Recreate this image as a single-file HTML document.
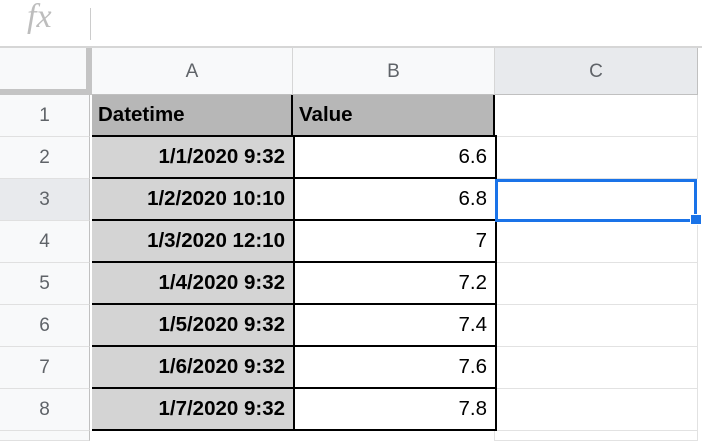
<!DOCTYPE html>
<html><head><style>
body{margin:0;width:702px;height:435px;overflow:hidden;background:#fff;font-family:"Liberation Sans",Arial,sans-serif;position:relative}
div{position:absolute;box-sizing:border-box}
.fx{left:27px;top:-2px;font-family:"Liberation Serif",serif;font-style:italic;font-size:34px;color:#bdbdbd}
.hd{background:#f8f9fa;color:#5f6368;font-size:19px;text-align:center}
.rh{left:0;width:90px;border-bottom:1px solid #e0e0e0;border-right:1px solid #c0c0c0;background:#f8f9fa;color:#5f6368;font-size:19px;text-align:center}
.c{font-size:20.5px;font-weight:bold;color:#000;text-align:right;padding-right:8px}
.g{background:#fff;border-bottom:1px solid #e2e2e2;border-right:1px solid #e2e2e2}
</style></head><body>
<div class="fx">fx</div>
<div style="left:90px;top:8px;width:1px;height:32px;background:#ccc"></div>
<div style="left:0;top:46px;width:702px;height:2px;background:#d6d6d6"></div>
<div style="left:0;top:48px;width:92px;height:47px;background:#f8f9fa;border-right:6px solid #c4c4c4;border-bottom:6px solid #c4c4c4"></div>
<div class="hd" style="left:92px;top:48px;width:201px;height:47px;line-height:47px;border-right:1px solid #d6d6d6;border-bottom:1px solid #c0c0c0">A</div>
<div class="hd" style="left:293px;top:48px;width:202px;height:47px;line-height:47px;border-right:1px solid #d6d6d6;border-bottom:1px solid #c0c0c0">B</div>
<div class="hd" style="left:495px;top:48px;width:203px;height:47px;line-height:47px;background:#e8eaed;border-right:1px solid #c0c0c0;border-bottom:1px solid #c0c0c0">C</div>
<div class="rh" style="top:95px;height:42px;line-height:42px">1</div>
<div class="rh" style="top:137px;height:42px;line-height:42px">2</div>
<div class="rh" style="top:179px;height:42px;line-height:42px;background:#e8eaed">3</div>
<div class="rh" style="top:221px;height:42px;line-height:42px">4</div>
<div class="rh" style="top:263px;height:42px;line-height:42px">5</div>
<div class="rh" style="top:305px;height:42px;line-height:42px">6</div>
<div class="rh" style="top:347px;height:42px;line-height:42px">7</div>
<div class="rh" style="top:389px;height:42px;line-height:42px">8</div>
<div class="rh" style="top:431px;height:10px"></div>
<div class="g" style="left:495px;top:95px;width:203px;height:42px"></div>
<div class="g" style="left:495px;top:137px;width:203px;height:42px"></div>
<div class="g" style="left:495px;top:221px;width:203px;height:42px"></div>
<div class="g" style="left:495px;top:263px;width:203px;height:42px"></div>
<div class="g" style="left:495px;top:305px;width:203px;height:42px"></div>
<div class="g" style="left:495px;top:347px;width:203px;height:42px"></div>
<div class="g" style="left:495px;top:389px;width:203px;height:42px"></div>
<div class="g" style="left:495px;top:431px;width:203px;height:10px"></div>
<div style="left:92px;top:95px;width:201px;height:42px;background:#b7b7b7;border-right:2px solid #000;border-bottom:2px solid #000"></div>
<div style="left:293px;top:95px;width:202px;height:42px;background:#b7b7b7;border-right:2px solid #000;border-bottom:2px solid #000"></div>
<div class="c" style="left:92px;top:95px;width:200px;height:40px;line-height:40px;text-align:left;padding-left:6px">Datetime</div>
<div class="c" style="left:293px;top:95px;width:200px;height:40px;line-height:40px;text-align:left;padding-left:6px">Value</div>
<div style="left:92px;top:431px;width:403px;height:10px;background:#fff;border-right:1px solid #e2e2e2"></div>
<script>
var d=[["1/1/2020 9:32","6.6"],["1/2/2020 10:10","6.8"],["1/3/2020 12:10","7"],["1/4/2020 9:32","7.2"],["1/5/2020 9:32","7.4"],["1/6/2020 9:32","7.6"],["1/7/2020 9:32","7.8"]];
var tops=[137,179,221,263,305,347,389],h='';
for(var i=0;i<7;i++){var t=tops[i]-2;
h+='<div style="left:92px;top:'+t+'px;width:203px;height:44px;background:#d4d4d4;border:2px solid #000;border-left:none"></div>';
h+='<div style="left:293px;top:'+t+'px;width:204px;height:44px;background:#fff;border:2px solid #000"></div>';
h+='<div class="c" style="left:92px;top:'+t+'px;width:201px;height:44px;line-height:44px">'+d[i][0]+'</div>';
h+='<div class="c" style="left:293px;top:'+t+'px;width:202px;height:44px;line-height:44px;font-weight:normal">'+d[i][1]+'</div>';}
document.body.insertAdjacentHTML('beforeend',h);
</script>
<div style="left:495px;top:179px;width:202px;height:43px;border:3px solid #1a73e8"></div>
<div style="left:690px;top:214px;width:12px;height:11px;background:#1a73e8;border:1px solid #fff"></div>
</body></html>
